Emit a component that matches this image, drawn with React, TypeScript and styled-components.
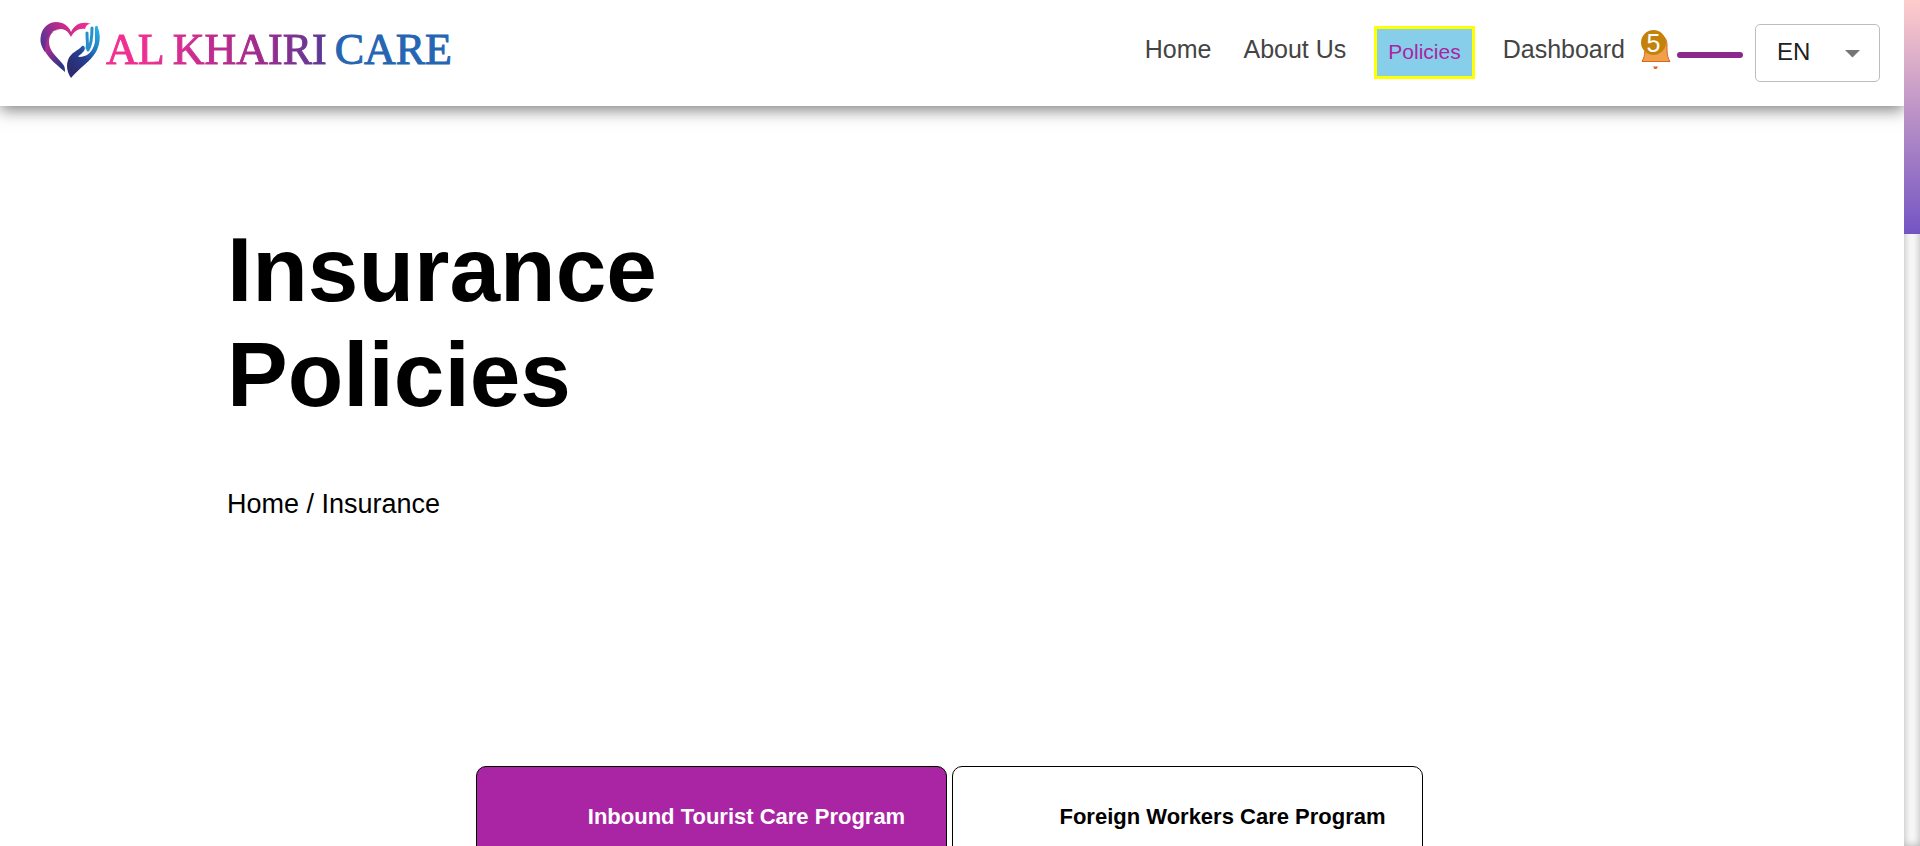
import React from 'react';
import styled, { createGlobalStyle, css } from 'styled-components';

const GlobalStyle = createGlobalStyle`
  *, *::before, *::after { box-sizing: border-box; }
  body {
    margin: 0;
    background: #fff;
    color: #000;
    font-family: "Liberation Sans", Arial, sans-serif;
  }
`;

const Page = styled.div`
  display: grid;
  grid-template-columns: minmax(0, 1fr) 16px;
  height: 100vh;
  overflow: hidden;
`;

const Content = styled.div`
  overflow: hidden;
`;

const Header = styled.header`
  display: flex;
  align-items: flex-start;
  justify-content: space-between;
  padding: 20px 24px 24px 40px;
  background: #fff;
  box-shadow: 0 4px 15px rgba(0, 0, 0, 0.5);
`;

const Brand = styled.a`
  display: flex;
  align-items: center;
  gap: 6px;
  text-decoration: none;
`;

const HeartLogo = styled.svg`
  display: block;
  width: 60px;
  height: 60px;
`;

const BrandName = styled.span`
  display: flex;
  gap: 8px;
  font-family: "Liberation Serif", "Times New Roman", serif;
  font-size: 44px;
  line-height: 60px;
  white-space: nowrap;
  color: #2565b2;
  -webkit-text-stroke: 1px #2565b2;
`;

const BrandAccent = styled.span`
  display: flex;
  gap: 8px;
  color: transparent;
  background: linear-gradient(90deg, #f2308f, #ec2f92 18%, #a22b8d 68%, #573a95);
  background-clip: text;
  -webkit-background-clip: text;
  -webkit-text-stroke: 1px transparent;
`;

const Toolbar = styled.div`
  display: flex;
  align-items: flex-start;
  padding-top: 4px;
`;

const Nav = styled.nav`
  display: flex;
  align-items: flex-start;
  padding-top: 2px;
`;

const NavLink = styled.a<{ $active?: boolean }>`
  padding: 8px 16px;
  font-size: 25px;
  line-height: 30px;
  color: #444;
  text-decoration: none;
  white-space: nowrap;
  ${({ $active }) =>
    $active &&
    css`
      margin: 0 12px;
      padding: 10px 11px 12px;
      border: 3px solid #ff0;
      background: skyblue;
      color: #a925a3;
      font-size: 21px;
      line-height: 25px;
    `}
`;

const Alerts = styled.button`
  position: relative;
  width: 30px;
  height: 40px;
  margin-top: 6px;
  padding: 0;
  border: 0;
  background: none;
`;

const Bell = styled.svg`
  display: block;
  width: 30px;
  height: 40px;
`;

const Count = styled.span`
  position: absolute;
  top: 0;
  left: 0;
  width: 25px;
  height: 25px;
  border-radius: 50%;
  background: #c4820a;
  color: #fff;
  font-size: 25px;
  line-height: 27px;
  text-align: center;
`;

const Divider = styled.hr`
  width: 66px;
  height: 6px;
  margin: 28px 12px 0 6px;
  border: 0;
  border-radius: 3px;
  background: #8c278c;
`;

const LanguageBox = styled.div`
  position: relative;
`;

const Language = styled.select`
  display: block;
  width: 125px;
  height: 58px;
  padding: 0 40px 3px 21px;
  border: 1px solid #bdbdbd;
  border-radius: 5px;
  background: #fff;
  color: #212121;
  font-family: inherit;
  font-size: 24px;
  appearance: none;
`;

const Caret = styled.svg`
  position: absolute;
  top: 26px;
  right: 20px;
  width: 15px;
  height: 8px;
  pointer-events: none;
`;

const Hero = styled.section`
  padding: 111px 227px 0;
`;

const Title = styled.h1`
  width: min-content;
  margin: 0;
  font-size: 91px;
  line-height: 105px;
`;

const Breadcrumb = styled.nav`
  margin-top: 62px;
  font-size: 27px;
  line-height: 31px;
`;

const Crumb = styled.a`
  color: inherit;
  text-decoration: none;
`;

const Programs = styled.section`
  display: flex;
  justify-content: center;
  gap: 5px;
  margin-top: 246px;
  padding-right: 5px;
`;

const Program = styled.button<{ $selected?: boolean }>`
  width: 471px;
  height: 102px;
  padding: 0 0 0 70px;
  border: 1px solid #000;
  border-radius: 10px;
  background: ${({ $selected }) => ($selected ? '#a925a3' : '#fff')};
  color: ${({ $selected }) => ($selected ? '#fff' : '#000')};
  font-family: inherit;
  font-size: 22px;
  font-weight: 700;
  line-height: 26px;
`;

const ScrollTrack = styled.div`
  background: #fafafa;
  box-shadow: inset 0 0 8px rgba(0, 0, 0, 0.3);
`;

const ScrollThumb = styled.div`
  height: 234px;
  background: linear-gradient(#ffcccb, #7355c3);
`;

export default function App() {
  return (
    <>
      <GlobalStyle />
      <Page>
        <Content>
          <Header>
            <Brand href="#home">
              <HeartLogo viewBox="0 0 60 60" aria-hidden="true">
                <defs>
                  <linearGradient id="heart" x1="0" y1="0.5" x2="1" y2="0.2">
                    <stop offset="0" stopColor="#5b3593" />
                    <stop offset="0.45" stopColor="#c02a8c" />
                    <stop offset="1" stopColor="#f32f90" />
                  </linearGradient>
                  <linearGradient id="heartSide" x1="0" y1="0" x2="0.6" y2="1">
                    <stop offset="0" stopColor="#e02e90" />
                    <stop offset="0.5" stopColor="#a02b8e" />
                    <stop offset="1" stopColor="#2c3488" />
                  </linearGradient>
                  <linearGradient id="hand" x1="0.9" y1="0" x2="0.3" y2="0.9">
                    <stop offset="0" stopColor="#27b4ea" />
                    <stop offset="0.4" stopColor="#2276bd" />
                    <stop offset="0.65" stopColor="#263f92" />
                    <stop offset="1" stopColor="#2b2c72" />
                  </linearGradient>
                </defs>
                <path fill="url(#heartSide)" d="M25 52C15 43 3 35 1 20L6 14L20 9C12 10 9 16 9 22C9 31 17 37 21 42C25 46 25 48 25 52Z" />
                <path fill="url(#heart)" d="M5 32C0 25 0 20 1 15C3 6 10 2 16 2C23 2 29 6 31 12C35 4 42 1 51 4C47 4 46 6 45 9C39 8 34 11 31 17C28 11 25 9 20 9C9 10 6 20 5 32Z" />
                <path fill="url(#hand)" d="M31 58C27 52 26 46 28 40C31 32 38 31 42 26C45 25 46 29 43 32C41 35 37 36 39 37C47 37 53 32 55 22V8C55 5 58 5 58 8C61 16 60 24 56 32C50 42 39 48 31 58Z" />
                <path fill="none" stroke="#2690cf" strokeWidth="3" strokeLinecap="round" d="M47 13C47 20 48 25 47 28M52 8C52 17 51 25 48 30" />
              </HeartLogo>
              <BrandName>
                <BrandAccent>
                  <span>AL</span> <span>KHAIRI</span>
                </BrandAccent>{' '}
                <span>CARE</span>
              </BrandName>
            </Brand>
            <Toolbar>
              <Nav aria-label="Main">
                <NavLink href="#home">Home</NavLink>
                <NavLink href="#about">About Us</NavLink>
                <NavLink href="#policies" $active aria-current="page">Policies</NavLink>
                <NavLink href="#dashboard">Dashboard</NavLink>
              </Nav>
              <Alerts type="button" aria-label="Notifications">
                <Bell viewBox="0 0 30 40" aria-hidden="true">
                  <path fill="#f0a04b" stroke="#d9651e" d="M1 31.500C4 27 4 22 4 15C4 8 8 4 15 4S26 8 26 15C26 22 26 27 29 31.500Z" />
                  <path fill="#d9651e" d="M12 36.500H17L15.500 39H13.500Z" />
                </Bell>
                <Count>5</Count>
              </Alerts>
              <Divider />
              <LanguageBox>
                <Language aria-label="Language" defaultValue="EN">
                  <option value="EN">EN</option>
                  <option value="AR">AR</option>
                </Language>
                <Caret viewBox="0 0 15 8" aria-hidden="true">
                  <path fill="#757575" d="M0 0H15L7.500 7.500Z" />
                </Caret>
              </LanguageBox>
            </Toolbar>
          </Header>
          <main>
            <Hero>
              <Title>Insurance Policies</Title>
              <Breadcrumb aria-label="Breadcrumb">
                <Crumb href="#home">Home</Crumb> / Insurance
              </Breadcrumb>
            </Hero>
            <Programs aria-label="Programs">
              <Program type="button" $selected>Inbound Tourist Care Program</Program>
              <Program type="button">Foreign Workers Care Program</Program>
            </Programs>
          </main>
        </Content>
        <ScrollTrack aria-hidden="true">
          <ScrollThumb />
        </ScrollTrack>
      </Page>
    </>
  );
}
